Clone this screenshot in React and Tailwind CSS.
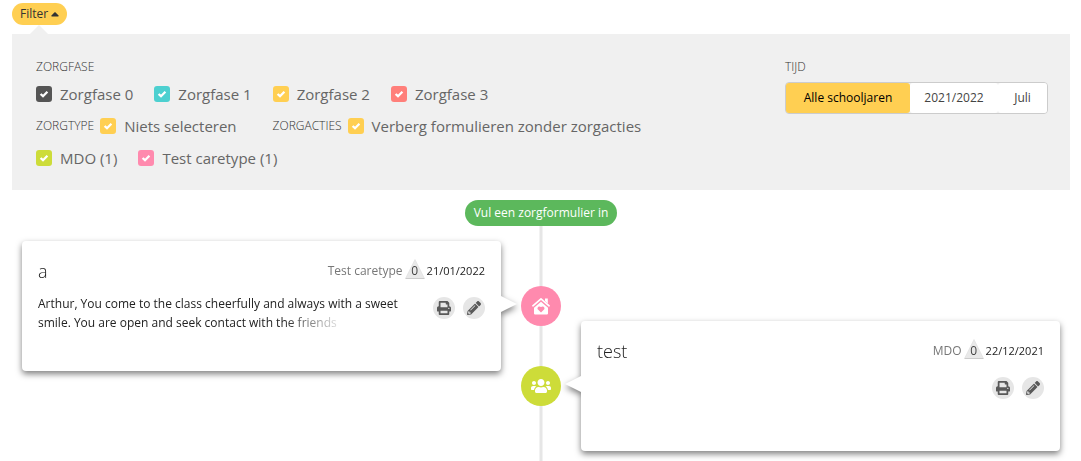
import { FaCaretUp, FaPencilAlt, FaPrint, FaUsers } from "react-icons/fa";

function HouseHeart() {
  return (
    <svg viewBox="0 0 20 18" className="h-[18px] w-5" aria-hidden="true">
      <path fill="none" stroke="#fff" strokeWidth="1.700" strokeLinecap="round" strokeLinejoin="round" d="M1.900 8.800 10 1.900l8.100 6.900" />
      <path fill="#fff" d="M14 1.400h2.800v5L14 4z" />
      <path
        fill="#fff"
        fillRule="evenodd"
        d="M10 4.800 17 10.700v5.900a.8.8 0 0 1-.8.8H3.800a.8.8 0 0 1-.8-.8v-5.900zM10 15.600l3-3c1.500-1.600-.8-4.400-3-2.500c-2.200-1.900-4.500.9-3 2.500z"
      />
    </svg>
  );
}

function Check({ color, children }) {
  return (
    <label className="flex h-8 items-center gap-2 whitespace-nowrap text-[15px] text-[#666]">
      <span className="relative grid size-4 place-items-center">
        <input type="checkbox" defaultChecked className={`peer size-4 appearance-none rounded-[3px] ${color}`} />
        <svg viewBox="0 0 16 16" aria-hidden="true" className="pointer-events-none absolute size-4 opacity-0 peer-checked:opacity-100">
          <path d="M4.600 8 7 10.200 11.400 5.800" fill="none" stroke="#fff" strokeWidth="2.300" />
        </svg>
      </span>
      {children}
    </label>
  );
}

function Heading({ children }) {
  return <h2 className="text-xs font-light whitespace-nowrap text-[#333] uppercase">{children}</h2>;
}

function IconButton({ label, children }) {
  return (
    <button type="button" aria-label={label} className="grid size-[22px] place-items-center rounded-full bg-[#e6e6e6] text-[#595959]">
      {children}
    </button>
  );
}

function Card({ title, type, date, pointer, className, children }) {
  return (
    <article className={`relative h-[130px] rounded-[4px] bg-white p-4 drop-shadow-[0_3px_3px_rgba(0,0,0,0.5)] ${className}`}>
      <svg
        viewBox="0 0 16 16"
        aria-hidden="true"
        className={`absolute top-[55px] size-4 fill-white ${pointer === "right" ? "left-full" : "right-full -scale-x-100"}`}
      >
        <path d="M0 0 16 8 0 16z" />
      </svg>
      <header className="flex h-7 items-center justify-between">
        <h3 className="text-lg font-light text-[#222]">{title}</h3>
        <div className="flex items-center gap-[2px] text-xs text-[#777]">
          <span>{type}</span>
          <span className="relative mb-1 grid size-5 place-items-center text-xs text-[#444]">
            <svg viewBox="0 0 20 20" className="absolute inset-0 size-5" aria-hidden="true">
              <path d="M10 .5 19.500 19.500H.500z" fill="#e9e9e9" />
              <path d="M.5 19.500h19" stroke="#ccc" />
              <path d="M10 .5 .5 19.500M10 .5l9.500 19" stroke="#ddd" strokeWidth=".6" />
            </svg>
            <span className="relative pt-1 leading-4">0</span>
          </span>
          <time className="text-[11px] text-[#222]">{date}</time>
        </div>
      </header>
      <div className="flex items-start justify-between pt-2">
        <div className="relative w-[374px] pt-px text-xs leading-[19px] text-[#222]">{children}</div>
        <div className="flex gap-2 pt-1">
          <IconButton label="Afdrukken">
            <FaPrint className="size-[14px]" />
          </IconButton>
          <IconButton label="Bewerken">
            <FaPencilAlt className="size-[14px]" />
          </IconButton>
        </div>
      </div>
    </article>
  );
}

export default function App() {
  return (
    <main className="bg-white pr-[11px] pl-3 pt-[3px] font-['Open_Sans','Noto_Sans',sans-serif]">
      <button type="button" className="flex h-[22px] items-center gap-[3px] rounded-full bg-[#ffcf52] px-2 text-xs text-[#333]">
        Filter
        <FaCaretUp className="h-[14px] w-2" />
      </button>
      <section className="relative mt-[9px] flex h-[156px] justify-between bg-[#f0f0f0] px-6 pt-[22px]">
        <svg viewBox="0 0 18 9" className="absolute bottom-full left-[18px] h-[9px] w-[18px] fill-[#f0f0f0]" aria-hidden="true">
          <path d="M0 9 9 0l9 9z" />
        </svg>
        <div>
          <div className="flex h-[22px] items-center">
            <Heading>Zorgfase</Heading>
          </div>
          <div className="flex gap-[21px]">
            <Check color="bg-[#555]">Zorgfase 0</Check>
            <Check color="bg-[#4dd0d0]">Zorgfase 1</Check>
            <Check color="bg-[#ffcf52]">Zorgfase 2</Check>
            <Check color="bg-[#ff7f7a]">Zorgfase 3</Check>
          </div>
          <div className="flex items-center gap-9">
            <div className="flex items-center gap-[6px]">
              <Heading>Zorgtype</Heading>
              <Check color="bg-[#ffcf52]">Niets selecteren</Check>
            </div>
            <div className="flex items-center gap-[6px]">
              <Heading>Zorgacties</Heading>
              <Check color="bg-[#ffcf52]">Verberg formulieren zonder zorgacties</Check>
            </div>
          </div>
          <div className="flex gap-[21px]">
            <Check color="bg-[#cddc39]">MDO (1)</Check>
            <Check color="bg-[#ff8aae]">Test caretype (1)</Check>
          </div>
        </div>
        <div className="w-[261px] shrink-0">
          <div className="flex h-[22px] items-center">
            <Heading>Tijd</Heading>
          </div>
          <div className="mt-1 flex h-8 w-[263px] rounded-[4px] border border-[#ccc] bg-[#f0f0f0] text-xs text-[#444]">
            <button type="button" className="w-[124px] rounded-[3px] bg-[#ffcf52] text-black">
              Alle schooljaren
            </button>
            <button type="button" className="w-[88px] rounded-[3px] bg-white">2021/2022</button>
            <button type="button" className="flex-1 rounded-[3px] bg-white">Juli</button>
          </div>
        </div>
      </section>
      <div className="flex justify-center pt-[10px]">
        <button type="button" className="h-[26px] rounded-full bg-[#5cb85c] px-[9px] text-xs text-white">
          Vul een zorgformulier in
        </button>
      </div>
      <section className="grid grid-cols-[1fr_80px_1fr] items-start px-[10px]">
        <Card title="a" type="Test caretype" date="21/01/2022" pointer="right" className="mt-[15px]">
          <p>Arthur, You come to the class cheerfully and always with a sweet smile. You are open and seek contact with the friends</p>
          <div className="absolute right-0 bottom-0 h-[19px] w-[130px] bg-linear-to-r from-transparent to-white to-50%" />
        </Card>
        <div className="relative flex flex-col items-center gap-10 self-stretch pt-[60px]">
          <div className="absolute inset-y-0 left-1/2 w-[3px] -translate-x-1/2 bg-[#e6e6e6]" />
          <div className="relative grid size-10 place-items-center rounded-full bg-[#ff8aae]">
            <HouseHeart />
          </div>
          <div className="relative grid size-10 place-items-center rounded-full bg-[#cddc39] text-white">
            <FaUsers className="size-5" />
          </div>
        </div>
        <Card title="test" type="MDO" date="22/12/2021" pointer="left" className="mt-[95px] mb-[10px]" />
      </section>
    </main>
  );
}
